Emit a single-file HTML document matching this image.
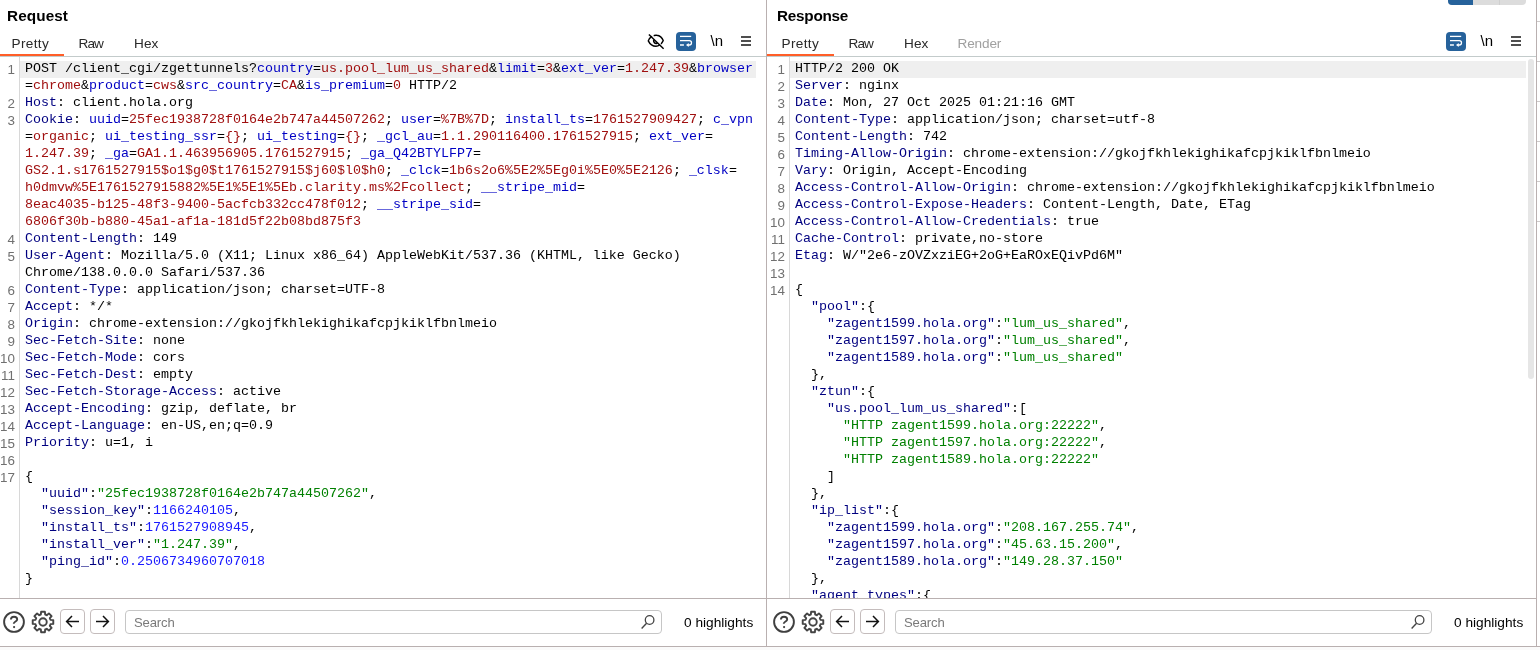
<!DOCTYPE html>
<html><head><meta charset="utf-8"><title>Burp</title>
<style>
html,body{margin:0;padding:0;}
body{width:1540px;height:650px;overflow:hidden;background:#fff;position:relative;font-family:"Liberation Sans",sans-serif;color:#000;}
.pane{position:absolute;top:0;width:766px;height:647px;overflow:hidden;will-change:transform;}
#req{left:0;}
#res{left:770px;}
.vdiv{position:absolute;top:0;width:1px;height:647px;background:#b9b0b0;}
.title{position:absolute;left:7px;top:6px;font-size:15.3px;font-weight:bold;line-height:20px;letter-spacing:0.1px;color:#000;}
.tab{position:absolute;top:35px;font-size:13.6px;line-height:18px;color:#2a2a2a;}
.tab.dis{color:#a0a0a0;}
.ul{position:absolute;top:54px;height:2px;background:#ff5e28;}
.hline{position:absolute;left:0;top:56px;width:1537px;height:1px;background:#c3cbcb;}
.bline{position:absolute;left:0;width:1537px;height:1px;background:#b9b0b0;}
.ed{position:absolute;left:0;top:57px;width:766px;height:541px;overflow:hidden;}
.gut{position:absolute;left:19px;top:0;width:1px;height:541px;background:#d8d8d8;}
.rows{position:absolute;left:0;top:4px;width:766px;}
.r{position:relative;height:17px;white-space:pre;font-family:"Liberation Mono",monospace;font-size:13.331px;line-height:17px;color:#000;}
.r.hl::before{content:"";position:absolute;left:20px;top:0;width:736px;height:17px;background:#efefef;}
.ln{position:absolute;left:0;top:0px;width:15px;text-align:right;font-family:"Liberation Sans",sans-serif;font-size:13.4px;line-height:17px;color:#707070;}
.c{position:absolute;left:25px;top:-1px;}
.k{color:#000080;}
.p{color:#0000c4;}
.v{color:#a00f0f;}
.g{color:#008000;}
.n{color:#1a1aff;}
.ico{position:absolute;}
.eye{left:644px;top:28px;}
.wrap{left:676px;top:32px;}
.nl{position:absolute;left:710.5px;top:32px;font-size:15px;line-height:18px;color:#000;letter-spacing:0.2px;}
.ham{position:absolute;left:741px;top:36px;width:10px;height:10px;}
.ham i{display:block;height:2px;background:#4e4e4e;margin-bottom:2px;}
.bot{position:absolute;left:0;top:599px;width:766px;height:47px;}
.help{position:absolute;left:2px;top:10.7px;}
.gear{position:absolute;left:30.9px;top:10.9px;}
.btn{position:absolute;top:10px;width:23px;height:23px;border:1px solid #c4bcbc;border-radius:4px;}
.btn svg{position:absolute;left:-1px;top:-1px;}
.b1{left:60px;}
.b2{left:90px;}
.search{position:absolute;left:125px;top:11px;width:535px;height:22px;border:1px solid #c6c6c6;border-radius:4px;}
.ph{position:absolute;left:8px;top:3px;font-size:13.1px;line-height:18px;color:#7a7a7a;letter-spacing:-0.15px;}
.mag{position:absolute;right:5.2px;top:3px;}
.hlc{position:absolute;left:684px;top:15px;font-size:13.7px;line-height:18px;color:#000;}
.foot{position:absolute;left:0;top:647px;width:1540px;height:3px;background:#fafafa;}
.seg{position:absolute;left:1448px;top:0;width:78px;height:5px;border-radius:0 0 4px 4px;overflow:hidden;background:#dcdcdc;}
.seg b{position:absolute;left:0;top:0;width:25px;height:5px;background:#26629b;}
.seg u{position:absolute;left:51px;top:0;width:1px;height:5px;background:#cfcfcf;}
.thumb{position:absolute;left:1528px;top:59px;width:6px;height:320px;border-radius:3px;background:#e6e6e6;}
.tick{position:absolute;left:1537px;width:3px;height:1px;background:#cfcbcb;}
</style></head><body>
<div class="pane" id="req">
<div class="title">Request</div>
<span class="tab" style="left:11.5px;letter-spacing:0.35px">Pretty</span><span class="tab" style="left:78.5px;letter-spacing:-0.9px">Raw</span><span class="tab" style="left:134px;letter-spacing:0.1px">Hex</span>
<svg class="ico eye" viewBox="644 28 26 26" width="26" height="26"><g fill="none" stroke="#000" stroke-width="1.45" stroke-linecap="round"><path d="M651.5 36.6 C649.7 37.8 648.7 39.3 648.3 40.9 C650 44.4 652.8 46.3 656 46.3 C657.4 46.3 658.6 45.8 659.6 45.0"/><path d="M654.3 35.5 C655 35.3 656 35.2 656.7 35.3 C659.7 35.6 662.2 37.8 663.2 40.6 C662.8 41.8 662.2 42.6 661.4 43.4"/><path d="M653.7 40.2 C653.3 42.4 655.2 43.9 657 43.2" stroke-width="1.6"/><path d="M648.9 34.4 L663.6 48.8" stroke-linecap="butt"/></g></svg><svg class="ico wrap" viewBox="0 0 20 19" width="20" height="19"><rect x="0" y="0" width="20" height="19" rx="4" fill="#26629b"/><path d="M4 4.4 H15.2" stroke="#fff" stroke-width="1.3" fill="none"/><path d="M4 8.6 H13.3 A2.2 2.2 0 0 1 13.3 13 H12" stroke="#fff" stroke-width="1.3" fill="none"/><path d="M12.7 10.9 L10 13 L12.7 15.1 Z" fill="#fff"/><path d="M4 13 H7.9" stroke="#e4ecf4" stroke-width="1.7" fill="none"/></svg><span class="nl">\n</span><span class="ham"><i></i><i></i><i></i></span>
<div class="ed"><div class="gut"></div><div class="rows">
<div class="r hl"><span class="ln">1</span><span class="c">POST /client_cgi/zgettunnels?<span class="p">country</span>=<span class="v">us.pool_lum_us_shared</span>&amp;<span class="p">limit</span>=<span class="v">3</span>&amp;<span class="p">ext_ver</span>=<span class="v">1.247.39</span>&amp;<span class="p">browser</span></span></div>
<div class="r"><span class="ln"></span><span class="c">=<span class="v">chrome</span>&amp;<span class="p">product</span>=<span class="v">cws</span>&amp;<span class="p">src_country</span>=<span class="v">CA</span>&amp;<span class="p">is_premium</span>=<span class="v">0</span> HTTP/2</span></div>
<div class="r"><span class="ln">2</span><span class="c"><span class="k">Host</span>: client.hola.org</span></div>
<div class="r"><span class="ln">3</span><span class="c"><span class="k">Cookie</span>: <span class="p">uuid</span>=<span class="v">25fec1938728f0164e2b747a44507262</span>; <span class="p">user</span>=<span class="v">%7B%7D</span>; <span class="p">install_ts</span>=<span class="v">1761527909427</span>; <span class="p">c_vpn</span></span></div>
<div class="r"><span class="ln"></span><span class="c">=<span class="v">organic</span>; <span class="p">ui_testing_ssr</span>=<span class="v">{}</span>; <span class="p">ui_testing</span>=<span class="v">{}</span>; <span class="p">_gcl_au</span>=<span class="v">1.1.290116400.1761527915</span>; <span class="p">ext_ver</span>=</span></div>
<div class="r"><span class="ln"></span><span class="c"><span class="v">1.247.39</span>; <span class="p">_ga</span>=<span class="v">GA1.1.463956905.1761527915</span>; <span class="p">_ga_Q42BTYLFP7</span>=</span></div>
<div class="r"><span class="ln"></span><span class="c"><span class="v">GS2.1.s1761527915$o1$g0$t1761527915$j60$l0$h0</span>; <span class="p">_clck</span>=<span class="v">1b6s2o6%5E2%5Eg0i%5E0%5E2126</span>; <span class="p">_clsk</span>=</span></div>
<div class="r"><span class="ln"></span><span class="c"><span class="v">h0dmvw%5E1761527915882%5E1%5E1%5Eb.clarity.ms%2Fcollect</span>; <span class="p">__stripe_mid</span>=</span></div>
<div class="r"><span class="ln"></span><span class="c"><span class="v">8eac4035-b125-48f3-9400-5acfcb332cc478f012</span>; <span class="p">__stripe_sid</span>=</span></div>
<div class="r"><span class="ln"></span><span class="c"><span class="v">6806f30b-b880-45a1-af1a-181d5f22b08bd875f3</span></span></div>
<div class="r"><span class="ln">4</span><span class="c"><span class="k">Content-Length</span>: 149</span></div>
<div class="r"><span class="ln">5</span><span class="c"><span class="k">User-Agent</span>: Mozilla/5.0 (X11; Linux x86_64) AppleWebKit/537.36 (KHTML, like Gecko)</span></div>
<div class="r"><span class="ln"></span><span class="c">Chrome/138.0.0.0 Safari/537.36</span></div>
<div class="r"><span class="ln">6</span><span class="c"><span class="k">Content-Type</span>: application/json; charset=UTF-8</span></div>
<div class="r"><span class="ln">7</span><span class="c"><span class="k">Accept</span>: */*</span></div>
<div class="r"><span class="ln">8</span><span class="c"><span class="k">Origin</span>: chrome-extension://gkojfkhlekighikafcpjkiklfbnlmeio</span></div>
<div class="r"><span class="ln">9</span><span class="c"><span class="k">Sec-Fetch-Site</span>: none</span></div>
<div class="r"><span class="ln">10</span><span class="c"><span class="k">Sec-Fetch-Mode</span>: cors</span></div>
<div class="r"><span class="ln">11</span><span class="c"><span class="k">Sec-Fetch-Dest</span>: empty</span></div>
<div class="r"><span class="ln">12</span><span class="c"><span class="k">Sec-Fetch-Storage-Access</span>: active</span></div>
<div class="r"><span class="ln">13</span><span class="c"><span class="k">Accept-Encoding</span>: gzip, deflate, br</span></div>
<div class="r"><span class="ln">14</span><span class="c"><span class="k">Accept-Language</span>: en-US,en;q=0.9</span></div>
<div class="r"><span class="ln">15</span><span class="c"><span class="k">Priority</span>: u=1, i</span></div>
<div class="r"><span class="ln">16</span><span class="c"></span></div>
<div class="r"><span class="ln">17</span><span class="c">{</span></div>
<div class="r"><span class="ln"></span><span class="c">  <span class="k">"uuid"</span>:<span class="g">"25fec1938728f0164e2b747a44507262"</span>,</span></div>
<div class="r"><span class="ln"></span><span class="c">  <span class="k">"session_key"</span>:<span class="n">1166240105</span>,</span></div>
<div class="r"><span class="ln"></span><span class="c">  <span class="k">"install_ts"</span>:<span class="n">1761527908945</span>,</span></div>
<div class="r"><span class="ln"></span><span class="c">  <span class="k">"install_ver"</span>:<span class="g">"1.247.39"</span>,</span></div>
<div class="r"><span class="ln"></span><span class="c">  <span class="k">"ping_id"</span>:<span class="n">0.2506734960707018</span></span></div>
<div class="r"><span class="ln"></span><span class="c">}</span></div>
</div></div>
<div class="bot">
<svg class="help" viewBox="0 0 24 24" width="24" height="24"><circle cx="12" cy="12" r="9.9" fill="none" stroke="#3f3f3f" stroke-width="1.9"/><path d="M8.9 9.6 C8.9 7.6 10.3 6.7 12 6.7 C13.8 6.7 15.2 7.8 15.2 9.4 C15.2 11.5 11.8 11.5 11.7 13.8" fill="none" stroke="#3f3f3f" stroke-width="1.85"/><circle cx="12.1" cy="17.1" r="1.1" fill="#3f3f3f"/></svg>
<svg class="gear" viewBox="0 0 24 24" width="24" height="24"><path d="M9.85 4.50 L10.10 1.72 L13.90 1.72 L14.15 4.50 A7.80 7.80 0 0 1 15.78 5.18 L17.92 3.39 L20.61 6.08 L18.82 8.22 A7.80 7.80 0 0 1 19.50 9.85 L22.28 10.10 L22.28 13.90 L19.50 14.15 A7.80 7.80 0 0 1 18.82 15.78 L20.61 17.92 L17.92 20.61 L15.78 18.82 A7.80 7.80 0 0 1 14.15 19.50 L13.90 22.28 L10.10 22.28 L9.85 19.50 A7.80 7.80 0 0 1 8.22 18.82 L6.08 20.61 L3.39 17.92 L5.18 15.78 A7.80 7.80 0 0 1 4.50 14.15 L1.72 13.90 L1.72 10.10 L4.50 9.85 A7.80 7.80 0 0 1 5.18 8.22 L3.39 6.08 L6.08 3.39 L8.22 5.18 A7.80 7.80 0 0 1 9.85 4.50 Z" fill="none" stroke="#444" stroke-width="1.9" stroke-linejoin="round"/><circle cx="12" cy="12" r="3.75" fill="none" stroke="#444" stroke-width="1.9"/></svg>
<span class="btn b1"><svg viewBox="0 0 25 25" width="25" height="25"><path d="M19 12.5 H7 M12 7 L6.6 12.5 L12 18" fill="none" stroke="#111" stroke-width="1.5"/></svg></span>
<span class="btn b2"><svg viewBox="0 0 25 25" width="25" height="25"><path d="M6 12.5 H18 M13 7 L18.4 12.5 L13 18" fill="none" stroke="#111" stroke-width="1.5"/></svg></span>
<span class="search"><span class="ph">Search</span><svg class="mag" viewBox="0 0 16 16" width="16" height="16"><circle cx="9.6" cy="6" r="4.3" fill="none" stroke="#444" stroke-width="1.3"/><path d="M6.6 9.2 L1.6 14.4" stroke="#444" stroke-width="1.4" fill="none"/></svg></span>
<span class="hlc">0 highlights</span>
</div>
</div>
<div class="pane" id="res">
<div class="title" style="letter-spacing:-0.25px">Response</div>
<span class="tab" style="left:11.5px;letter-spacing:0.35px">Pretty</span><span class="tab" style="left:78.5px;letter-spacing:-0.9px">Raw</span><span class="tab" style="left:134px;letter-spacing:0.1px">Hex</span><span class="tab dis" style="left:187.5px;letter-spacing:-0.15px">Render</span>
<svg class="ico wrap" viewBox="0 0 20 19" width="20" height="19"><rect x="0" y="0" width="20" height="19" rx="4" fill="#26629b"/><path d="M4 4.4 H15.2" stroke="#fff" stroke-width="1.3" fill="none"/><path d="M4 8.6 H13.3 A2.2 2.2 0 0 1 13.3 13 H12" stroke="#fff" stroke-width="1.3" fill="none"/><path d="M12.7 10.9 L10 13 L12.7 15.1 Z" fill="#fff"/><path d="M4 13 H7.9" stroke="#e4ecf4" stroke-width="1.7" fill="none"/></svg><span class="nl">\n</span><span class="ham"><i></i><i></i><i></i></span>
<div class="ed"><div class="gut"></div><div class="rows">
<div class="r hl"><span class="ln">1</span><span class="c">HTTP/2 200 OK</span></div>
<div class="r"><span class="ln">2</span><span class="c"><span class="k">Server</span>: nginx</span></div>
<div class="r"><span class="ln">3</span><span class="c"><span class="k">Date</span>: Mon, 27 Oct 2025 01:21:16 GMT</span></div>
<div class="r"><span class="ln">4</span><span class="c"><span class="k">Content-Type</span>: application/json; charset=utf-8</span></div>
<div class="r"><span class="ln">5</span><span class="c"><span class="k">Content-Length</span>: 742</span></div>
<div class="r"><span class="ln">6</span><span class="c"><span class="k">Timing-Allow-Origin</span>: chrome-extension://gkojfkhlekighikafcpjkiklfbnlmeio</span></div>
<div class="r"><span class="ln">7</span><span class="c"><span class="k">Vary</span>: Origin, Accept-Encoding</span></div>
<div class="r"><span class="ln">8</span><span class="c"><span class="k">Access-Control-Allow-Origin</span>: chrome-extension://gkojfkhlekighikafcpjkiklfbnlmeio</span></div>
<div class="r"><span class="ln">9</span><span class="c"><span class="k">Access-Control-Expose-Headers</span>: Content-Length, Date, ETag</span></div>
<div class="r"><span class="ln">10</span><span class="c"><span class="k">Access-Control-Allow-Credentials</span>: true</span></div>
<div class="r"><span class="ln">11</span><span class="c"><span class="k">Cache-Control</span>: private,no-store</span></div>
<div class="r"><span class="ln">12</span><span class="c"><span class="k">Etag</span>: W/"2e6-zOVZxziEG+2oG+EaROxEQivPd6M"</span></div>
<div class="r"><span class="ln">13</span><span class="c"></span></div>
<div class="r"><span class="ln">14</span><span class="c">{</span></div>
<div class="r"><span class="ln"></span><span class="c">  <span class="k">"pool"</span>:{</span></div>
<div class="r"><span class="ln"></span><span class="c">    <span class="k">"zagent1599.hola.org"</span>:<span class="g">"lum_us_shared"</span>,</span></div>
<div class="r"><span class="ln"></span><span class="c">    <span class="k">"zagent1597.hola.org"</span>:<span class="g">"lum_us_shared"</span>,</span></div>
<div class="r"><span class="ln"></span><span class="c">    <span class="k">"zagent1589.hola.org"</span>:<span class="g">"lum_us_shared"</span></span></div>
<div class="r"><span class="ln"></span><span class="c">  },</span></div>
<div class="r"><span class="ln"></span><span class="c">  <span class="k">"ztun"</span>:{</span></div>
<div class="r"><span class="ln"></span><span class="c">    <span class="k">"us.pool_lum_us_shared"</span>:[</span></div>
<div class="r"><span class="ln"></span><span class="c">      <span class="g">"HTTP zagent1599.hola.org:22222"</span>,</span></div>
<div class="r"><span class="ln"></span><span class="c">      <span class="g">"HTTP zagent1597.hola.org:22222"</span>,</span></div>
<div class="r"><span class="ln"></span><span class="c">      <span class="g">"HTTP zagent1589.hola.org:22222"</span></span></div>
<div class="r"><span class="ln"></span><span class="c">    ]</span></div>
<div class="r"><span class="ln"></span><span class="c">  },</span></div>
<div class="r"><span class="ln"></span><span class="c">  <span class="k">"ip_list"</span>:{</span></div>
<div class="r"><span class="ln"></span><span class="c">    <span class="k">"zagent1599.hola.org"</span>:<span class="g">"208.167.255.74"</span>,</span></div>
<div class="r"><span class="ln"></span><span class="c">    <span class="k">"zagent1597.hola.org"</span>:<span class="g">"45.63.15.200"</span>,</span></div>
<div class="r"><span class="ln"></span><span class="c">    <span class="k">"zagent1589.hola.org"</span>:<span class="g">"149.28.37.150"</span></span></div>
<div class="r"><span class="ln"></span><span class="c">  },</span></div>
<div class="r"><span class="ln"></span><span class="c">  <span class="k">"agent_types"</span>:{</span></div>
</div></div>
<div class="bot">
<svg class="help" viewBox="0 0 24 24" width="24" height="24"><circle cx="12" cy="12" r="9.9" fill="none" stroke="#3f3f3f" stroke-width="1.9"/><path d="M8.9 9.6 C8.9 7.6 10.3 6.7 12 6.7 C13.8 6.7 15.2 7.8 15.2 9.4 C15.2 11.5 11.8 11.5 11.7 13.8" fill="none" stroke="#3f3f3f" stroke-width="1.85"/><circle cx="12.1" cy="17.1" r="1.1" fill="#3f3f3f"/></svg>
<svg class="gear" viewBox="0 0 24 24" width="24" height="24"><path d="M9.85 4.50 L10.10 1.72 L13.90 1.72 L14.15 4.50 A7.80 7.80 0 0 1 15.78 5.18 L17.92 3.39 L20.61 6.08 L18.82 8.22 A7.80 7.80 0 0 1 19.50 9.85 L22.28 10.10 L22.28 13.90 L19.50 14.15 A7.80 7.80 0 0 1 18.82 15.78 L20.61 17.92 L17.92 20.61 L15.78 18.82 A7.80 7.80 0 0 1 14.15 19.50 L13.90 22.28 L10.10 22.28 L9.85 19.50 A7.80 7.80 0 0 1 8.22 18.82 L6.08 20.61 L3.39 17.92 L5.18 15.78 A7.80 7.80 0 0 1 4.50 14.15 L1.72 13.90 L1.72 10.10 L4.50 9.85 A7.80 7.80 0 0 1 5.18 8.22 L3.39 6.08 L6.08 3.39 L8.22 5.18 A7.80 7.80 0 0 1 9.85 4.50 Z" fill="none" stroke="#444" stroke-width="1.9" stroke-linejoin="round"/><circle cx="12" cy="12" r="3.75" fill="none" stroke="#444" stroke-width="1.9"/></svg>
<span class="btn b1"><svg viewBox="0 0 25 25" width="25" height="25"><path d="M19 12.5 H7 M12 7 L6.6 12.5 L12 18" fill="none" stroke="#111" stroke-width="1.5"/></svg></span>
<span class="btn b2"><svg viewBox="0 0 25 25" width="25" height="25"><path d="M6 12.5 H18 M13 7 L18.4 12.5 L13 18" fill="none" stroke="#111" stroke-width="1.5"/></svg></span>
<span class="search"><span class="ph">Search</span><svg class="mag" viewBox="0 0 16 16" width="16" height="16"><circle cx="9.6" cy="6" r="4.3" fill="none" stroke="#444" stroke-width="1.3"/><path d="M6.6 9.2 L1.6 14.4" stroke="#444" stroke-width="1.4" fill="none"/></svg></span>
<span class="hlc">0 highlights</span>
</div>
</div>
<div class="hline"></div><div class="ul" style="left:0;width:64px"></div><div class="ul" style="left:767px;width:67px"></div><div class="bline" style="top:598px"></div><div class="bline" style="top:646px;width:1540px"></div>
<div class="vdiv" style="left:766px"></div>
<div class="vdiv" style="left:1536px"></div>
<div class="seg"><b></b><u></u></div>
<div class="thumb"></div>
<div class="tick" style="top:21px"></div><div class="tick" style="top:61px"></div><div class="tick" style="top:101px"></div><div class="tick" style="top:141px"></div><div class="tick" style="top:181px"></div><div class="tick" style="top:221px"></div>
<div class="foot"></div>
</body></html>
